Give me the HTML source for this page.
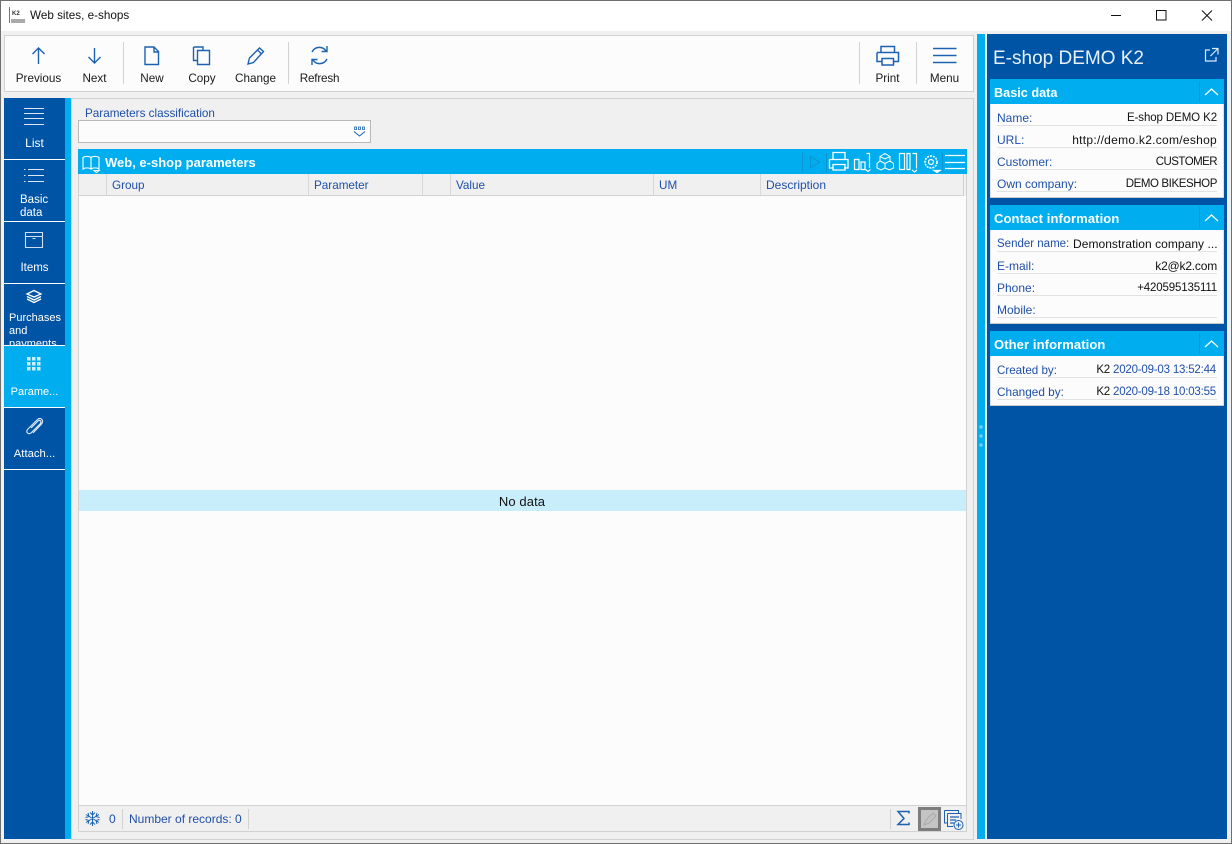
<!DOCTYPE html>
<html><head><meta charset="utf-8"><style>
html,body{margin:0;padding:0}
body{width:1232px;height:844px;position:relative;overflow:hidden;background:#f0f0f0;font-family:"Liberation Sans",sans-serif;font-size:12px;color:#111}
div,span,svg{position:absolute}
.t{white-space:nowrap;line-height:14px}
.c{transform:translateX(-50%)}
.b{color:#1f4fa8}
.w{color:#fff}
.tb{color:#1a1a1a;font-size:11.7px}
.box{background:#fcfcfc;box-shadow:inset 0 -1px 0 #c8c8c8,inset 1px 0 0 #e0e0e0,inset -1px 0 0 #e0e0e0}
svg{overflow:visible;fill:none}
</style></head><body>
<div style="left:0;top:0;width:1230px;height:842px;border:1px solid #6f6f6f"></div>
<div style="left:1px;top:1px;width:1230px;height:30px;background:#fff"></div>
<svg style="left:9px;top:7px" width="17" height="17"><path d="M.5 0V16" stroke="#777"/><rect x="2" y="12" width="14" height="4" fill="#aaa"/></svg>
<div class="t" style="left:12px;top:10px;font-size:6px;font-weight:bold;line-height:8px;color:#333">K2</div>
<div class="t" style="left:30px;top:9px;color:#111;font-size:11.7px">Web sites, e-shops</div>
<svg style="left:1110px;top:8px" width="104" height="16" stroke="#111"><path d="M1 7.500H11"/><rect x="46.500" y="2.500" width="9.500" height="9.500"/><path d="M92 2.500L102 12.500M102 2.500L92 12.500"/></svg>

<div style="left:4px;top:35px;width:968px;height:55px;background:#fcfcfc;border:1px solid #d2d2d2"></div>
<div style="left:123px;top:42px;width:1px;height:42px;background:#d2d2d2"></div>
<div style="left:288px;top:42px;width:1px;height:42px;background:#d2d2d2"></div>
<div style="left:859px;top:42px;width:1px;height:42px;background:#d2d2d2"></div>
<div style="left:916px;top:42px;width:1px;height:42px;background:#d2d2d2"></div>
<svg style="left:0;top:0" width="1000" height="80" stroke="#1c62b0" stroke-width="1.400">
<path d="M38.500 64V48M32.500 54L38.500 48L44.500 54"/>
<path d="M94.500 48V63M88.500 57L94.500 63L100.500 57"/>
<path d="M145 47H154L158.500 51.500V64.500H145ZM154 47V52H158.500"/>
<path d="M193.500 47H203V50.500M193.500 47V60.500H197M197.500 50.500H209.500V64.500H197.500Z"/>
<path d="M248 64L249.500 58L259.500 48L263.500 51.500L253.500 62.500ZM257.500 50L261.500 54"/>
<path d="M312 52C315 46 323 46 326 51M327 46V51.500H321.500M327 59C324 65 316 65 313 60M312 65V59.500H317.500"/>
<path d="M881 52V46.500H894.500V52M877 52.500H898.500V61.500H893.500M877 52.500V61.500H882M882 58.500H893.500V65H882Z" stroke-width="1.500"/>
<path d="M933 48.500H956.500M933 55.500H956.500M933 62.500H956.500"/>
</svg>
<div class="t c tb" style="left:38.500px;top:72px">Previous</div>
<div class="t c tb" style="left:94.500px;top:72px">Next</div>
<div class="t c tb" style="left:152px;top:72px">New</div>
<div class="t c tb" style="left:202px;top:72px">Copy</div>
<div class="t c tb" style="left:255.500px;top:72px">Change</div>
<div class="t c tb" style="left:319.500px;top:72px;letter-spacing:-.2px">Refresh</div>
<div class="t c tb" style="left:887.500px;top:72px">Print</div>
<div class="t c tb" style="left:944.500px;top:72px">Menu</div>

<div style="left:4px;top:98px;width:61px;height:741px;background:#0054a6"></div>
<div style="left:65px;top:98px;width:6px;height:741px;background:#00aeef"></div>
<div style="left:4px;top:345px;width:67px;height:62px;background:#00aeef"></div>
<div style="left:71px;top:98px;width:901px;height:740px;background:#f0f0f0;border:1px solid #d2d2d2"></div>
<div style="left:4px;top:159px;width:61px;height:1px;background:#fff"></div>
<div style="left:4px;top:221px;width:61px;height:1px;background:#fff"></div>
<div style="left:4px;top:283px;width:61px;height:1px;background:#fff"></div>
<div style="left:4px;top:345px;width:61px;height:1px;background:#fff"></div>
<div style="left:4px;top:407px;width:61px;height:1px;background:#fff"></div>
<div style="left:4px;top:469px;width:61px;height:1px;background:#fff"></div>
<svg style="left:0;top:0" width="70" height="470" stroke="#fff">
<path d="M24 108.500H44M24 113.500H44M24 118.500H44M24 124.500H44" stroke="#dbe8f5"/>
<path d="M28 169.500H44M28 175.500H44M28 181.500H44M24 169.500H25.500M24 175.500H25.500M24 181.500H25.500" stroke="#dbe8f5"/>
<path d="M25.500 232.500H42.500V247.500H25.500ZM25.500 236.500H42.500M32.500 238.500H35.500" stroke="#cfe0f2" stroke-width="1.100"/>
<path d="M34 290.500L41 294L34 297L27 294ZM27 296.500L34 300L41 296.500M27 299L34 302.500L41 299" stroke-width="1.300"/>
<g fill="#cdeefb" stroke="none"><rect x="27" y="357" width="3.500" height="3.500"/><rect x="32" y="357" width="3.500" height="3.500"/><rect x="37" y="357" width="3.500" height="3.500"/><rect x="27" y="362" width="3.500" height="3.500"/><rect x="32" y="362" width="3.500" height="3.500"/><rect x="37" y="362" width="3.500" height="3.500"/><rect x="27" y="367" width="3.500" height="3.500"/><rect x="32" y="367" width="3.500" height="3.500"/><rect x="37" y="367" width="3.500" height="3.500"/></g>
<path d="M31 428L38 421C40 419 42 422 40 424L31.500 432.500C28.500 435.500 25 432 28 429L37.500 419.500C40.500 416.500 44.500 420.500 41.500 424L33 433" stroke="#dbe8f5" stroke-width="1.200"/>
</svg>
<div class="t c w" style="left:34.500px;top:136px">List</div>
<div class="t w" style="left:20px;top:194px;line-height:13px;font-size:11.500px">Basic<br>data</div>
<div class="t c w" style="left:34.500px;top:261px;font-size:11.500px">Items</div>
<div style="left:4px;top:284px;width:61px;height:61px;overflow:hidden"><div class="t w" style="left:5px;top:28px;line-height:13px;font-size:11px">Purchases<br>and<br>payments</div></div>
<div class="t c w" style="left:34.500px;top:385px;font-size:11px">Parame...</div>
<div class="t c w" style="left:34.500px;top:447px;font-size:11.300px">Attach...</div>

<div class="t b" style="left:85px;top:107px;font-size:11.700px">Parameters classification</div>
<div style="left:78px;top:120px;width:291px;height:21px;background:#fcfcfc;border:1px solid #b9b9b9"></div>
<svg style="left:353px;top:126px" width="14" height="12" stroke="#1c62b0"><path d="M1.500 1H3.500V3.500H1.500ZM5.500 1H7.500V3.500H5.500ZM9.500 1H11.500V3.500H9.500Z" stroke-width=".8"/><path d="M1 5.500L6.500 10L12 5.500"/></svg>

<div style="left:78px;top:149px;width:889px;height:25px;background:#00aeef"></div>
<svg style="left:82px;top:155px" width="20" height="18" stroke="#fff" stroke-width="1.100"><path d="M1 2.500C3 1 7 1 9 2.500V14C7 12.500 3 12.500 1 14ZM9 2.500C11 1 15 1 17 2.500V14C15 12.500 11 12.500 9 14M12 15.500H17L14.500 17.500Z"/></svg>
<div class="t w" style="left:105px;top:156px;font-weight:bold;font-size:13px">Web, e-shop parameters</div>
<svg style="left:800px;top:150px" width="170" height="26" stroke="#fff" stroke-width="1.200">
<path d="M2.500 3V22M26.500 3V22M142.500 3V22" stroke="#0c95d2" stroke-width="1"/>
<path d="M10.500 6.500L19.500 12L10.500 17.500Z" stroke="#0c95d2"/>
<path d="M33 9.500V2.500H45V9.500M29.500 9.500H48V18H44M29.500 9.500V18H33M33 14.500H45V20H33Z" stroke-width="1.300"/>
<path d="M54.500 9.500H59V19.500H54.500ZM61 12H65V19.500H61ZM66.500 3.500H69.500V18M65.500 19.500L68 21.500L70.500 19.500" stroke-width="1.200"/>
<path d="M85 3.500L90 6.500V11L85 13.500L80 11V6.500ZM80 11L85 13.500V18L81 20L77 18V13.500ZM90 11L93.500 13.500V18L89.500 20L85 18M80 6.500L85 9L90 6.500" stroke-width="1"/>
<path d="M99.500 3.500H104.500V19.500H99.500ZM107 3.500H110V19.500H107ZM112.500 3.500H116.500V18.500M112 20L114.500 22L117 20" stroke-width="1.200"/>
<circle cx="131" cy="12" r="6" stroke-width="1.600" stroke-dasharray="2 1"/><circle cx="131" cy="12" r="2.500"/><path d="M134 20.500H140L137 22.500Z" fill="#fff"/>
<path d="M145 5.500H165M145 12.500H165M145 18.500H165" stroke-width="1.300"/>
</svg>

<div style="left:78px;top:174px;width:885px;height:21px;background:#f0f0f0;border-bottom:1px solid #d2d2d2;border-right:1px solid #d2d2d2"></div>
<div style="left:78px;top:196px;width:888px;height:609px;background:#fcfcfc"></div>
<div style="left:78px;top:174px;width:1px;height:631px;background:#d2d2d2"></div>
<div style="left:966px;top:174px;width:1px;height:631px;background:#d2d2d2"></div>
<div style="left:106px;top:174px;width:1px;height:21px;background:#d8d8d8"></div>
<div style="left:308px;top:174px;width:1px;height:21px;background:#d8d8d8"></div>
<div style="left:422px;top:174px;width:1px;height:21px;background:#d8d8d8"></div>
<div style="left:450px;top:174px;width:1px;height:21px;background:#d8d8d8"></div>
<div style="left:653px;top:174px;width:1px;height:21px;background:#d8d8d8"></div>
<div style="left:760px;top:174px;width:1px;height:21px;background:#d8d8d8"></div>
<div class="t b" style="left:112px;top:179px;font-size:11.700px">Group</div>
<div class="t b" style="left:314px;top:179px;font-size:11.700px">Parameter</div>
<div class="t b" style="left:456px;top:179px;font-size:11.700px">Value</div>
<div class="t b" style="left:659px;top:179px;font-size:11.700px">UM</div>
<div class="t b" style="left:766px;top:178px">Description</div>

<div style="left:79px;top:490px;width:887px;height:21px;background:#c9eefb"></div>
<div class="t c" style="left:522px;top:495px;font-size:13px;letter-spacing:.1px;color:#111">No data</div>

<div style="left:78px;top:805px;width:889px;height:25px;background:#f0f0f0;border-top:1px solid #d2d2d2;border-bottom:1px solid #d2d2d2"></div>
<div style="left:78px;top:805px;width:1px;height:27px;background:#d2d2d2"></div>
<div style="left:966px;top:805px;width:1px;height:27px;background:#d2d2d2"></div>
<div style="left:122px;top:809px;width:1px;height:20px;background:#d2d2d2"></div>
<div style="left:248px;top:809px;width:1px;height:20px;background:#d2d2d2"></div>
<div style="left:890px;top:809px;width:1px;height:20px;background:#d2d2d2"></div>
<svg style="left:84px;top:810px" width="18" height="18" stroke="#1c62b0"><path d="M8.500 1V16M2 4.500L15 12.500M15 4.500L2 12.500M6 2.500L8.500 5L11 2.500M6 14.500L8.500 12L11 14.500M1.500 7.500L5 6.500L4 3M15.500 7.500L12 6.500L13 3M1.500 9.500L5 10.500L4 14M15.500 9.500L12 10.500L13 14"/></svg>
<div class="t b" style="left:109px;top:812px">0</div>
<div class="t b" style="left:129px;top:812px">Number of records: 0</div>
<svg style="left:896px;top:810px" width="16" height="18" stroke="#1c62b0" stroke-width="1.500"><path d="M13 3.500V1.500H2L8 8.500L2 14.500H13V12.500"/></svg>
<div style="left:918px;top:807px;background:#c4c4c4;border:3px solid #7d7d7d;width:17px;height:18px"></div>
<svg style="left:921px;top:810px" width="18" height="18" stroke="#aaa"><path d="M3 15L5 10L12 3L15 6L8 13Z"/></svg>
<svg style="left:943px;top:809px" width="22" height="22" stroke="#1c62b0"><path d="M1.500 1.500H15.500V4M1.500 1.500V14H4"/><path d="M4.500 4.500H18V10M4.500 4.500V17.500H10"/><path d="M7 8H16M7 11H13M7 14H11" stroke-width="1.200"/><circle cx="15.500" cy="16" r="4.500" fill="#f0f0f0"/><path d="M13 16H18M15.500 13.500V18.500"/></svg>

<div style="left:977px;top:34px;width:8px;height:805px;background:#00aeef"></div>
<svg style="left:978px;top:424px" width="6" height="24"><circle cx="3" cy="3" r="1.700" fill="#6fd0f5"/><circle cx="3" cy="12" r="1.700" fill="#6fd0f5"/><circle cx="3" cy="21" r="1.700" fill="#6fd0f5"/></svg>
<div style="left:987px;top:34px;width:240px;height:805px;background:#0054a6"></div>
<div class="t" style="left:993px;top:47px;color:#e8f1fa;font-size:19px;line-height:24px">E-shop DEMO K2</div>
<svg style="left:1205px;top:48px" width="14" height="14" stroke="#dcebf8" stroke-width="1.200"><path d="M5 2H.5V13H11V9M7 .5H13V6.500M13 .500L5.500 8"/></svg>

<div style="left:990px;top:79px;width:234px;height:25px;background:#00aeef"></div>
<div class="box" style="left:990px;top:104px;width:234px;height:94px"></div>
<div class="t w" style="left:994px;top:86px;font-weight:bold;font-size:12.700px">Basic data</div>
<div style="left:1199px;top:81px;width:1px;height:21px;background:#0c95d2"></div>
<svg style="left:1204px;top:87px" width="16" height="10" stroke="#fff" stroke-width="1.200"><path d="M1 8L7.500 2L14 8"/></svg>
<div style="left:997px;top:125px;width:220px;height:1px;background:#e2e2e2"></div>
<div style="left:997px;top:147px;width:220px;height:1px;background:#e2e2e2"></div>
<div style="left:997px;top:169px;width:220px;height:1px;background:#e2e2e2"></div>
<div style="left:997px;top:191px;width:220px;height:1px;background:#e2e2e2"></div>
<div class="t b" style="left:997px;top:111px">Name:</div><div class="t" style="right:15px;top:111px;font-size:11.500px;letter-spacing:-.1px">E-shop DEMO K2</div>
<div class="t b" style="left:997px;top:133px">URL:</div><div class="t" style="right:15px;top:133px;letter-spacing:.28px">http://demo.k2.com/eshop</div>
<div class="t b" style="left:997px;top:155px">Customer:</div><div class="t" style="right:15px;top:155px;font-size:11.500px;letter-spacing:-.55px">CUSTOMER</div>
<div class="t b" style="left:997px;top:177px">Own company:</div><div class="t" style="right:15px;top:177px;font-size:11.500px;letter-spacing:-.4px">DEMO BIKESHOP</div>

<div style="left:990px;top:205px;width:234px;height:25px;background:#00aeef"></div>
<div class="box" style="left:990px;top:230px;width:234px;height:94px"></div>
<div class="t w" style="left:994px;top:212px;font-weight:bold;font-size:13px;letter-spacing:.1px">Contact information</div>
<div style="left:1199px;top:207px;width:1px;height:21px;background:#0c95d2"></div>
<svg style="left:1204px;top:213px" width="16" height="10" stroke="#fff" stroke-width="1.200"><path d="M1 8L7.500 2L14 8"/></svg>
<div style="left:997px;top:251px;width:220px;height:1px;background:#e2e2e2"></div>
<div style="left:997px;top:273px;width:220px;height:1px;background:#e2e2e2"></div>
<div style="left:997px;top:295px;width:220px;height:1px;background:#e2e2e2"></div>
<div style="left:997px;top:317px;width:220px;height:1px;background:#e2e2e2"></div>
<div class="t b" style="left:997px;top:237px;font-size:11.500px">Sender name:</div><div class="t" style="left:1073px;top:237px;letter-spacing:.05px">Demonstration company ...</div>
<div class="t b" style="left:997px;top:259px">E-mail:</div><div class="t" style="right:15px;top:259px;letter-spacing:-.2px">k2@k2.com</div>
<div class="t b" style="left:997px;top:281px">Phone:</div><div class="t" style="right:15px;top:281px;font-size:11.500px;letter-spacing:-.15px">+420595135111</div>
<div class="t b" style="left:997px;top:303px">Mobile:</div>

<div style="left:990px;top:331px;width:234px;height:25px;background:#00aeef"></div>
<div class="box" style="left:990px;top:356px;width:234px;height:50px"></div>
<div class="t w" style="left:994px;top:338px;font-weight:bold;font-size:13px;letter-spacing:.1px">Other information</div>
<div style="left:1199px;top:333px;width:1px;height:21px;background:#0c95d2"></div>
<svg style="left:1204px;top:339px" width="16" height="10" stroke="#fff" stroke-width="1.200"><path d="M1 8L7.500 2L14 8"/></svg>
<div style="left:997px;top:377px;width:220px;height:1px;background:#e2e2e2"></div>
<div style="left:997px;top:399px;width:220px;height:1px;background:#e2e2e2"></div>
<div class="t b" style="left:997px;top:364px;font-size:11.600px">Created by:</div><div class="t" style="right:16px;top:363px;font-size:11.500px;letter-spacing:-.2px">K2 <span class="b" style="position:static">2020-09-03 13:52:44</span></div>
<div class="t b" style="left:997px;top:385px;font-size:11.800px">Changed by:</div><div class="t" style="right:16px;top:385px;font-size:11.500px;letter-spacing:-.2px">K2 <span class="b" style="position:static">2020-09-18 10:03:55</span></div>
</body></html>
